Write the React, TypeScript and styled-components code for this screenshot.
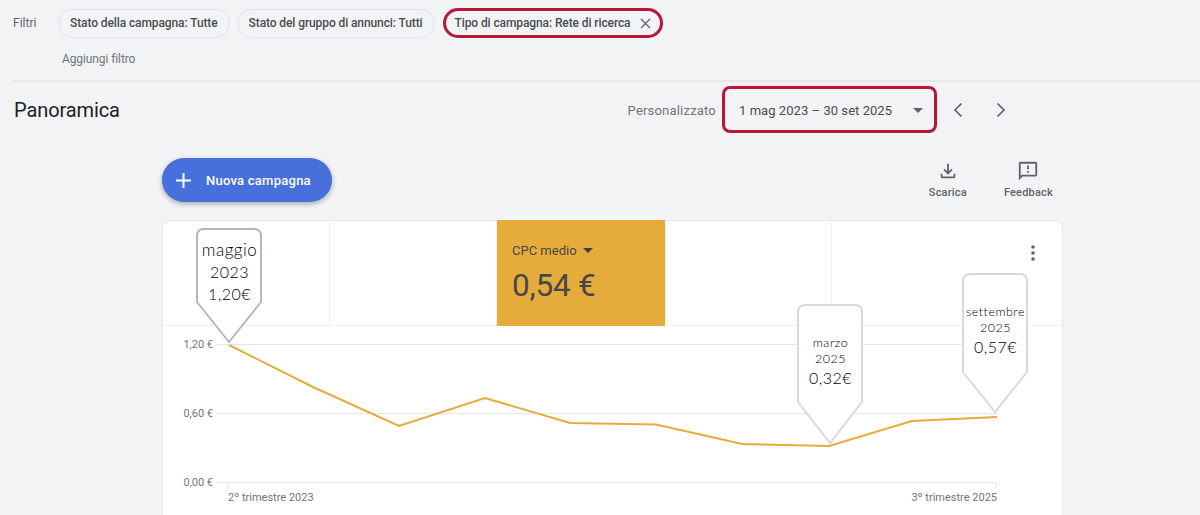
import React from "react";
import styled, { createGlobalStyle } from "styled-components";

const GlobalStyle = createGlobalStyle`
  html, body {
    margin: 0;
    height: 515px;
    overflow: hidden;
    background: #f1f3f5;
    font-family: Roboto, "Liberation Sans", sans-serif;
    color: #3c4043;
  }
`;

const Page = styled.div`
  width: 1200px;
  height: 515px;
  overflow: hidden;
`;

const FilterBar = styled.div`
  margin-left: 13px;
  padding-top: 8px;
  height: 72px;
  border-bottom: 2px solid #e6e8ea;
  box-sizing: content-box;
`;

const ChipRow = styled.div`
  display: flex;
  align-items: center;
  height: 30px;
`;

const FilterLabel = styled.span`
  width: 45px;
  font-size: 12px;
  color: #5f6368;
`;

const Chip = styled.div<{ $active?: boolean }>`
  display: flex;
  align-items: center;
  gap: ${(p) => (p.$active ? "10px" : "9px")};
  box-sizing: border-box;
  height: ${(p) => (p.$active ? "30px" : "29px")};
  margin-right: 7px;
  padding: 0 ${(p) => (p.$active ? "9px" : "11px")} 0 ${(p) => (p.$active ? "9px" : "11px")};
  border: ${(p) => (p.$active ? "3px solid #bb1537" : "1px solid #dfe1e5")};
  border-radius: 15px;
  font-size: 12px;
  font-weight: 500;
  letter-spacing: -0.1px;
  color: #4a4d51;
  white-space: nowrap;
  margin-left: ${(p) => (p.$active ? "1px" : "0")};
`;

const AddFilter = styled.div`
  margin: 14px 0 0 49px;
  font-size: 12px;
  letter-spacing: -0.1px;
  color: #70757a;
`;

const HeadRow = styled.div`
  display: flex;
  align-items: center;
  height: 50px;
  margin-top: 3px;
  padding-left: 14px;
`;

const Title = styled.h1`
  flex: 1;
  margin: 0;
  font-size: 20px;
  font-weight: 400;
  letter-spacing: -0.1px;
  color: #202124;
`;

const RangeLabel = styled.span`
  margin-right: 6px;
  font-size: 13px;
  letter-spacing: 0.2px;
  color: #70757a;
`;

const DateBox = styled.div`
  display: flex;
  align-items: center;
  justify-content: space-between;
  box-sizing: border-box;
  width: 215px;
  height: 47px;
  margin-bottom: 1px;
  padding: 1px 11px 0 14px;
  border: 3px solid #bb1537;
  border-radius: 8px;
  font-size: 13px;
  letter-spacing: 0.05px;
  color: #4a4d51;
`;

const Caret = styled.span<{ $dark?: boolean }>`
  display: inline-block;
  width: 0;
  height: 0;
  border-left: 5px solid transparent;
  border-right: 5px solid transparent;
  border-top: 5px solid ${(p) => (p.$dark ? "#3c4043" : "#5f6368")};
`;

const Pager = styled.div`
  display: flex;
  gap: 19px;
  width: 263px;
  padding-left: 9px;
  box-sizing: border-box;
  color: #5f6368;
`;

const PagerButton = styled.svg`
  width: 24px;
  height: 24px;
  fill: none;
  stroke: currentColor;
  stroke-width: 1.7;
`;

const Content = styled.div`
  width: 901px;
  margin-left: 162px;
`;

const Toolbar = styled.div`
  display: flex;
  align-items: flex-start;
  justify-content: space-between;
  height: 62px;
  margin-top: 23px;
`;

const NewButton = styled.button`
  display: flex;
  align-items: center;
  width: 170px;
  height: 44px;
  padding: 0 0 0 13px;
  border: 0;
  border-radius: 22px;
  background: #4870dc;
  box-shadow: 0 2px 5px rgba(60, 64, 67, 0.4);
  color: #fff;
  font-family: inherit;
  font-size: 13px;
  font-weight: 500;
  letter-spacing: 0.25px;
`;

const PlusIcon = styled.svg`
  width: 17px;
  height: 17px;
  margin-right: 14px;
  stroke: #fff;
  stroke-width: 2;
`;

const Actions = styled.div`
  display: flex;
  margin-top: 2px;
  margin-right: 10px;
  gap: 37px;
`;

const Action = styled.div`
  display: flex;
  flex-direction: column;
  align-items: center;
  font-size: 11px;
  font-weight: 500;
  letter-spacing: 0.2px;
  color: #5f6368;
`;

const ActionIcon = styled.svg`
  width: 22px;
  height: 22px;
  margin-bottom: 4px;
  fill: #5f6368;
`;

const Card = styled.div`
  position: relative;
  height: 320px;
  box-sizing: border-box;
  background: #fff;
  border: 1px solid #e6e8ea;
  border-radius: 8px;
`;

const Tiles = styled.div`
  display: grid;
  grid-template-columns: 167px 167px 168px 167px 1fr;
  height: 104px;
  border-bottom: 1px solid #eef0f1;
`;

const Tile = styled.div<{ $selected?: boolean }>`
  padding: 23px 15px 0;
  margin: ${(p) => (p.$selected ? "-1px 0 -1px" : "0")};
  border-right: 1px solid ${(p) => (p.$selected ? "transparent" : "#eceef0")};
  background: ${(p) => (p.$selected ? "#e5ac3b" : "transparent")};
  &:last-child {
    border-right: 0;
  }
`;

const TileName = styled.div`
  display: flex;
  align-items: center;
  gap: 6px;
  height: 14px;
  margin-bottom: 10px;
  font-size: 13px;
  color: #45474a;
`;

const TileValue = styled.div`
  font-size: 31.5px;
  line-height: 37px;
  letter-spacing: -0.2px;
  color: #45474a;
`;

const MenuIcon = styled.svg`
  position: absolute;
  top: 24px;
  right: 17px;
  width: 24px;
  height: 16px;
  fill: #5f6368;
`;

const Chart = styled.svg`
  display: block;
  width: 899px;
  height: 189px;
`;

const AxisText = styled.text`
  font-family: Roboto, "Liberation Sans", sans-serif;
  font-size: 11px;
  fill: #70757a;
`;

const Callout = styled.div<{ $x: number; $y: number; $h: number; $top: number }>`
  position: absolute;
  left: ${(p) => p.$x}px;
  top: ${(p) => p.$y}px;
  width: 67px;
  height: ${(p) => p.$h}px;
  padding-top: ${(p) => p.$top}px;
  box-sizing: border-box;
  text-align: center;
  font-family: Lato, "Noto Sans", sans-serif;
  font-weight: 300;
  letter-spacing: 0.5px;
  color: #000;
`;

const CalloutShape = styled.svg<{ $h: number }>`
  position: absolute;
  inset: 0;
  width: 67px;
  height: ${(p) => p.$h}px;
  overflow: visible;
`;

const CalloutLine = styled.div<{ $size: number; $lh: number }>`
  position: relative;
  font-size: ${(p) => p.$size}px;
  line-height: ${(p) => p.$lh}px;
`;

const points = "66,19 150,61 236,100 322,72 407,97 493,98.5 579,118 666,120 749,95 834,91";

type Tag = {
  x: number;
  y: number;
  h: number;
  shoulder: number;
  stroke: string;
  top: number;
  lines: [string, number, number][];
};

const tags: Tag[] = [
  {
    x: 33,
    y: 7,
    h: 115,
    shoulder: 74,
    stroke: "#b6b7bb",
    top: 11,
    lines: [
      ["maggio", 17, 22],
      ["2023", 16, 22],
      ["1,20€", 16, 21],
    ],
  },
  {
    x: 634,
    y: 83,
    h: 140,
    shoulder: 98,
    stroke: "#d9d9d9",
    top: 31,
    lines: [
      ["marzo", 12.5, 16],
      ["2025", 12.5, 16],
      ["0,32€", 16, 22],
    ],
  },
  {
    x: 799,
    y: 52,
    h: 140,
    shoulder: 99,
    stroke: "#d9d9d9",
    top: 31,
    lines: [
      ["settembre", 12.5, 16],
      ["2025", 12.5, 16],
      ["0,57€", 16, 22],
    ],
  },
];

function shapePath(h: number, shoulder: number) {
  return `M8 1 H58 Q65 1 65 8 V${shoulder} L33 ${h - 1} L1 ${shoulder} V8 Q1 1 8 1 Z`;
}

export default function App() {
  return (
    <Page>
      <GlobalStyle />
      <FilterBar>
        <ChipRow>
          <FilterLabel>Filtri</FilterLabel>
          <Chip>Stato della campagna: Tutte</Chip>
          <Chip>Stato del gruppo di annunci: Tutti</Chip>
          <Chip $active>
            Tipo di campagna: Rete di ricerca
            <svg width="11" height="11" viewBox="0 0 11 11" stroke="#5f6368" strokeWidth="1.3">
              <path d="M1 1l9 9M10 1l-9 9" />
            </svg>
          </Chip>
        </ChipRow>
        <AddFilter>Aggiungi filtro</AddFilter>
      </FilterBar>

      <HeadRow>
        <Title>Panoramica</Title>
        <RangeLabel>Personalizzato</RangeLabel>
        <DateBox>
          1 mag 2023 – 30 set 2025
          <Caret />
        </DateBox>
        <Pager>
          <PagerButton viewBox="0 0 24 24">
            <path d="M15.5 5.5L9 12l6.5 6.5" />
          </PagerButton>
          <PagerButton viewBox="0 0 24 24">
            <path d="M8.5 5.5L15 12l-6.5 6.5" />
          </PagerButton>
        </Pager>
      </HeadRow>

      <Content>
        <Toolbar>
          <NewButton>
            <PlusIcon viewBox="0 0 17 17">
              <path d="M8.5 1v15M1 8.5h15" />
            </PlusIcon>
            Nuova campagna
          </NewButton>
          <Actions>
            <Action>
              <ActionIcon viewBox="0 0 24 24">
                <path d="M18 15v3H6v-3H4v3c0 1.1.9 2 2 2h12c1.1 0 2-.9 2-2v-3h-2zm-1-4l-1.41-1.41L13 12.17V4h-2v8.17L8.41 9.59 7 11l5 5 5-5z" />
              </ActionIcon>
              Scarica
            </Action>
            <Action>
              <ActionIcon viewBox="0 0 24 24">
                <path d="M20 2H4c-1.1 0-2 .9-2 2v18l4-4h14c1.1 0 2-.9 2-2V4c0-1.1-.9-2-2-2zm0 14H5.17L4 17.17V4h16v12zM11 12h2v2h-2zm0-6h2v4h-2z" />
              </ActionIcon>
              Feedback
            </Action>
          </Actions>
        </Toolbar>

        <Card>
          <Tiles>
            <Tile />
            <Tile />
            <Tile $selected>
              <TileName>
                CPC medio
                <Caret $dark />
              </TileName>
              <TileValue>0,54 €</TileValue>
            </Tile>
            <Tile />
            <Tile />
          </Tiles>
          <MenuIcon viewBox="0 0 24 16">
            <circle cx="12" cy="2" r="1.8" />
            <circle cx="12" cy="8" r="1.8" />
            <circle cx="12" cy="14" r="1.8" />
          </MenuIcon>

          <Chart viewBox="0 0 899 189">
            <g stroke="#e4e6e8" strokeWidth="1">
              <path d="M54 18.5H834M54 87.5H834M54 156.5H834" />
              <path d="M65.5 157v5M833.5 157v5" />
            </g>
            <AxisText x="50" y="22" textAnchor="end">1,20 €</AxisText>
            <AxisText x="50" y="91" textAnchor="end">0,60 €</AxisText>
            <AxisText x="50" y="160" textAnchor="end">0,00 €</AxisText>
            <AxisText x="65" y="175">2º trimestre 2023</AxisText>
            <AxisText x="834" y="175" textAnchor="end">3º trimestre 2025</AxisText>
            <polyline points={points} fill="none" stroke="#e5ac3b" strokeWidth="2" />
          </Chart>

          {tags.map((t) => (
            <Callout key={t.x} $x={t.x} $y={t.y} $h={t.h} $top={t.top}>
              <CalloutShape $h={t.h} viewBox={`0 0 67 ${t.h}`}>
                <path d={shapePath(t.h, t.shoulder)} fill="#fff" stroke={t.stroke} strokeWidth="2" />
              </CalloutShape>
              {t.lines.map(([text, size, lh]) => (
                <CalloutLine key={text} $size={size} $lh={lh}>
                  {text}
                </CalloutLine>
              ))}
            </Callout>
          ))}
        </Card>
      </Content>
    </Page>
  );
}
